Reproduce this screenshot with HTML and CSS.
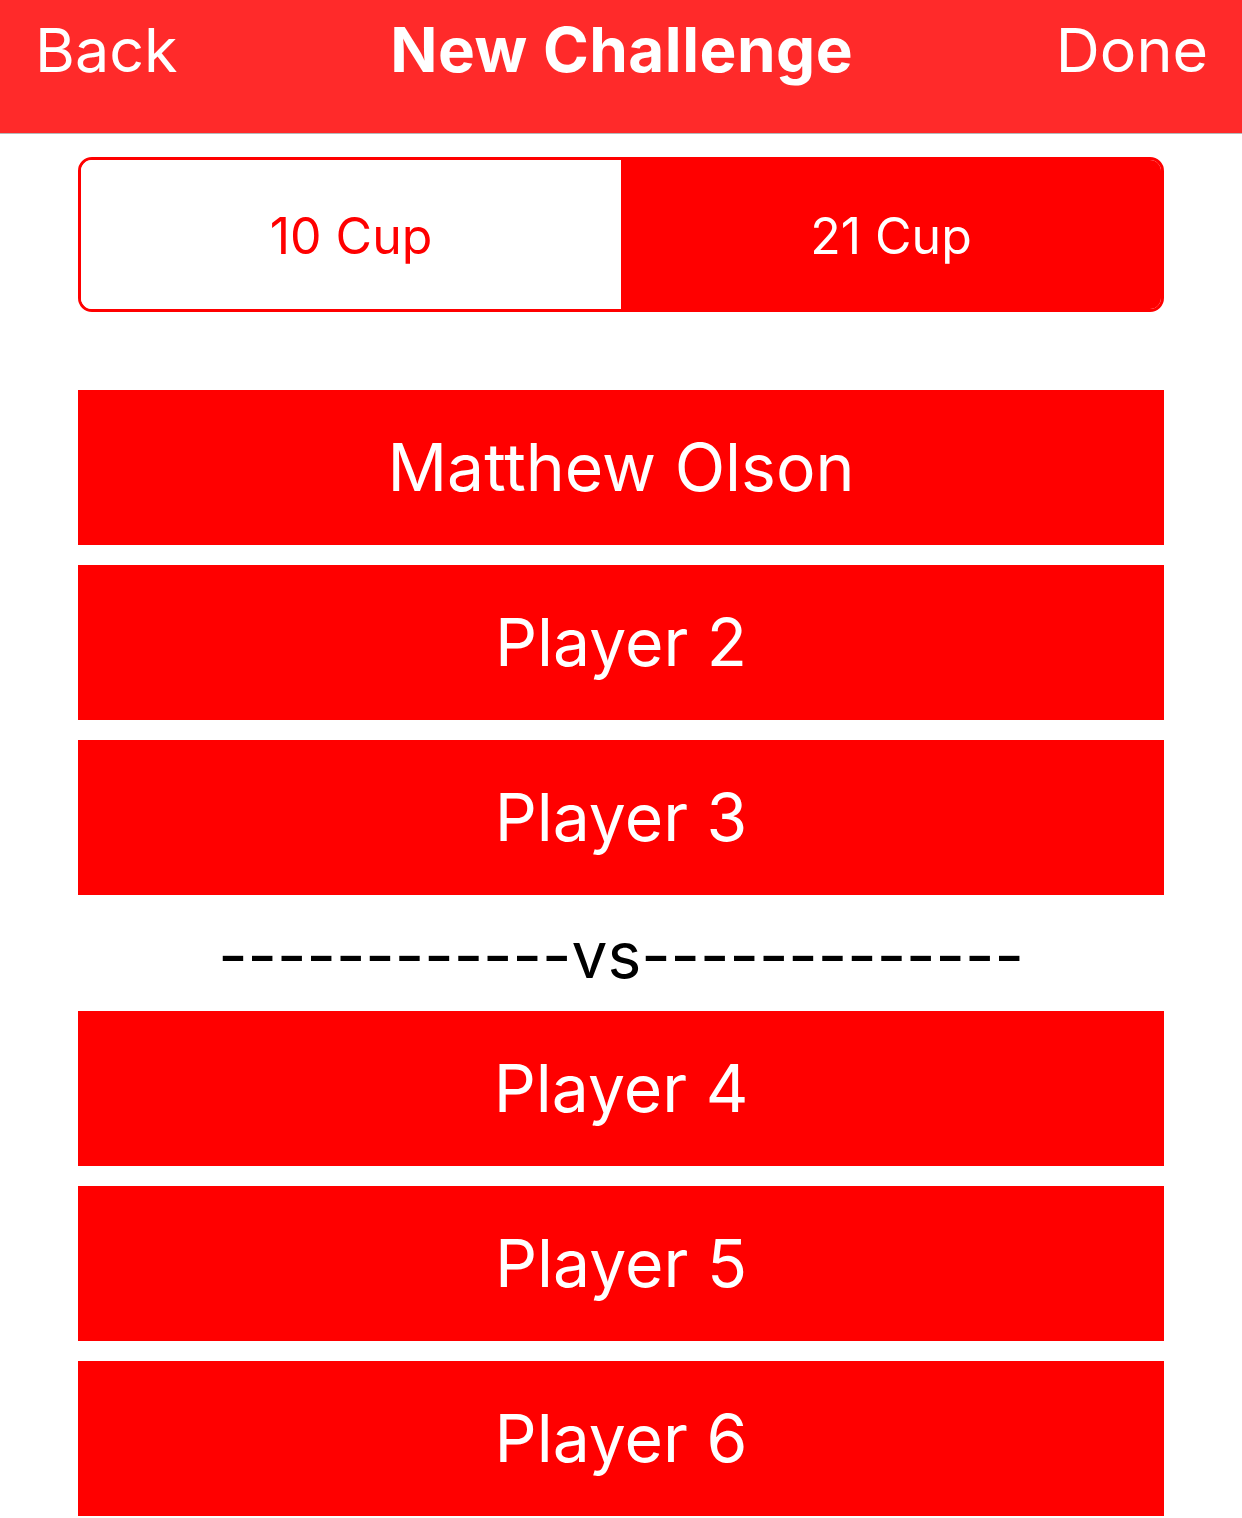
FILE: index.html
```html
<!DOCTYPE html>
<html>
<head>
<meta charset="utf-8">
<link rel="stylesheet" href="styles.css">
</head>
<body>
<header class="navbar">
  <span class="nav-side nav-left">Back</span>
  <span class="nav-title">New Challenge</span>
  <span class="nav-side nav-right">Done</span>
</header>
<main class="content">
  <div class="segmented">
    <div class="seg">10 Cup</div>
    <div class="seg seg-selected">21 Cup</div>
  </div>
  <div class="players">
    <div class="player">Matthew Olson</div>
    <div class="player">Player 2</div>
    <div class="player">Player 3</div>
    <div class="versus">------------vs-------------</div>
    <div class="player">Player 4</div>
    <div class="player">Player 5</div>
    <div class="player">Player 6</div>
  </div>
</main>
</body>
</html>
```
FILE: styles.css
```css
html, body {
  margin: 0;
  padding: 0;
  background: #ffffff;
  font-family: Inter, "Noto Sans", "Liberation Sans", sans-serif;
}
body {
  width: 1242px;
  height: 1518px;
  overflow: hidden;
}
.navbar {
  height: 133px;
  background: #ff2a2a;
  border-bottom: 1px solid #b8b8b8;
  display: flex;
  align-items: flex-start;
  justify-content: space-between;
  padding: 0 34px 0 35px;
  color: #ffffff;
}
.nav-side {
  font-size: 61px;
  line-height: 100px;
  font-weight: 400;
  letter-spacing: 0;
}
.nav-title {
  font-size: 62px;
  line-height: 100px;
  font-weight: 700;
  letter-spacing: 0.5px;
  margin-left: 10px;
}
.content {
  display: flex;
  flex-direction: column;
  align-items: center;
  padding-top: 23px;
}
.segmented {
  width: 1086px;
  height: 155px;
  box-sizing: border-box;
  border: 3px solid #ff0000;
  border-radius: 14px;
  display: flex;
  overflow: hidden;
}
.seg {
  flex: 1;
  display: flex;
  align-items: center;
  justify-content: center;
  font-size: 50px;
  color: #ff0000;
  background: #ffffff;
  letter-spacing: 0;
  padding-top: 3px;
}
.seg-selected {
  background: #ff0000;
  color: #ffffff;
}
.players {
  margin-top: 78px;
  display: flex;
  flex-direction: column;
  gap: 20px;
  width: 1086px;
}
.player {
  height: 155px;
  background: #ff0000;
  color: #ffffff;
  display: flex;
  align-items: center;
  justify-content: center;
  font-size: 66px;
  letter-spacing: 0;
  padding-bottom: 2px;
  box-sizing: border-box;
}
.versus {
  height: 76px;
  display: flex;
  align-items: center;
  justify-content: center;
  font-size: 64px;
  color: #000000;
  letter-spacing: 0;
  padding-top: 2px;
  box-sizing: border-box;
}
```
